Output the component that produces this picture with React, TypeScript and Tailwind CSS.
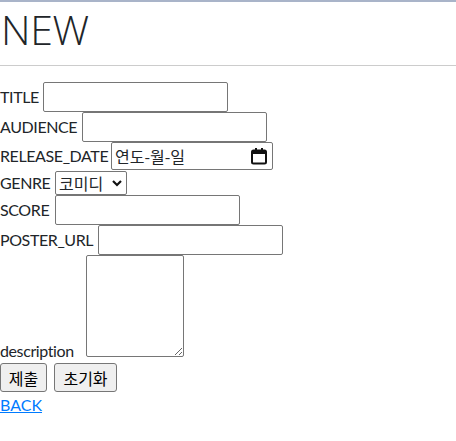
import React from "react";

const font = "font-['Lato','Noto_Sans_CJK_KR',sans-serif]";
const box = "border border-[#767676] rounded-[2px] bg-white";
const lbl = "shrink-0 tracking-[-0.4px]";

const rows = [
  { label: "TITLE", lw: "w-[43px]" },
  { label: "AUDIENCE", lw: "w-[82px]" },
];

const App = () => {
  return (
    <div className={`${font} text-[16px] text-[#212529] bg-white w-[456px] h-[441px] overflow-hidden`}>
      <div className="h-[2px] bg-[#a9b4c9]" />
      <h1 className="font-['Open_Sans',sans-serif] text-[41px] leading-[52px] font-light pt-[1px] pl-[1px] h-[63px] text-[#212529] tracking-[-0.3px]">
        NEW
      </h1>
      <hr className="border-0 border-t border-[#cccccc] m-0" />
      <form className="pt-[16px] flex flex-col">
        {rows.map(({ label, lw }) => (
          <div key={label} className="flex items-center h-[30px]">
            <span className={`${lw} ${lbl}`}>{label}</span>
            <input className={`${box} w-[185px] h-[30px] px-1`} />
          </div>
        ))}
        <div className="flex items-center h-[28px]">
          <span className={`w-[111px] ${lbl}`}>RELEASE_DATE</span>
          <div className={`${box} w-[162px] h-[28px] flex items-center justify-between pl-[3px] pr-[4px]`}>
            <span className="font-['Noto_Sans_CJK_KR',sans-serif]">연도-월-일</span>
            <svg width="18" height="18" viewBox="0 0 18 18">
              <rect x="2" y="3.5" width="14" height="13" rx="1.5" fill="none" stroke="#111" strokeWidth="2" />
              <rect x="2" y="3.5" width="14" height="3.5" fill="#111" />
              <rect x="5" y="1" width="2" height="3" fill="#111" />
              <rect x="11" y="1" width="2" height="3" fill="#111" />
            </svg>
          </div>
        </div>
        <div className="flex items-center h-[25px]">
          <span className={`w-[55px] ${lbl}`}>GENRE</span>
          <div className={`${box} w-[72px] h-[24px] flex items-center justify-between pl-[3px] pr-[3px]`}>
            <span className="font-['Noto_Sans_CJK_KR',sans-serif] leading-none">코미디</span>
            <svg width="12" height="10" viewBox="0 0 12 10">
              <path d="M2 3l4 4 4-4" fill="none" stroke="#111" strokeWidth="2.2" />
            </svg>
          </div>
        </div>
        <div className="flex items-center h-[30px]">
          <span className={`w-[55px] ${lbl}`}>SCORE</span>
          <input className={`${box} w-[185px] h-[30px] px-1`} />
        </div>
        <div className="flex items-center h-[30px]">
          <span className={`w-[98px] ${lbl}`}>POSTER_URL</span>
          <input className={`${box} w-[185px] h-[30px] px-1`} />
        </div>
        <div className="flex items-end h-[102px]">
          <span className={`w-[86px] ${lbl} leading-[22px] mb-[-5px]`}>description</span>
          <textarea className={`${box} w-[98px] h-[102px] resize`} />
        </div>
        <div className="flex gap-[7px] mt-[6px]">
          <button type="button" className="w-[47px] h-[29px] border border-[#767676] rounded-[3px] bg-[#efefef] font-['Noto_Sans_CJK_KR',sans-serif] text-black">
            제출
          </button>
          <button type="button" className="w-[63px] h-[29px] border border-[#767676] rounded-[3px] bg-[#efefef] font-['Noto_Sans_CJK_KR',sans-serif] text-black">
            초기화
          </button>
        </div>
      </form>
      <a href="#" className="inline-block mt-[1px] text-[#007bff] underline leading-[24px]">
        BACK
      </a>
    </div>
  );
};

export default App;
